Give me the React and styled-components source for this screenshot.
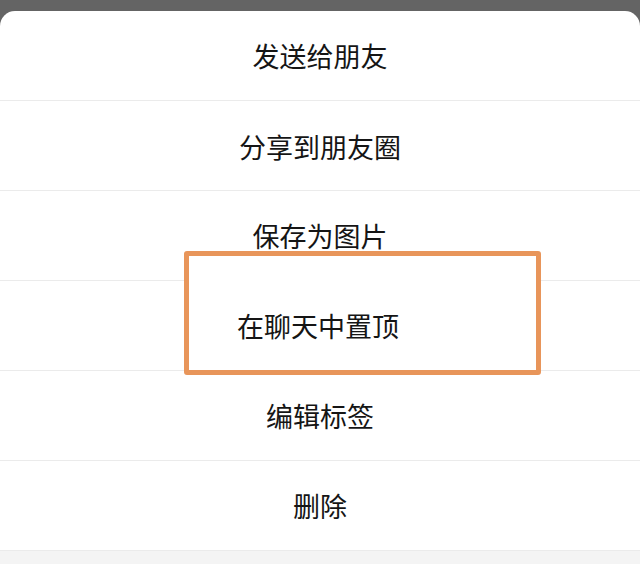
import styled, { createGlobalStyle } from 'styled-components';

const Global = createGlobalStyle`
  html, body {
    margin: 0;
    padding: 0;
    background: #646464;
  }
  body {
    font-family: "Noto Sans CJK SC", "Noto Sans", sans-serif;
  }
`;

const Page = styled.div`
  width: 640px;
  height: 582px;
  overflow: hidden;
  padding-top: 11px;
  box-sizing: border-box;
`;

const Sheet = styled.div`
  position: relative;
  background: #ffffff;
  border-radius: 15px 15px 0 0;
  height: 571px;
`;

const Row = styled.div`
  height: 90px;
  display: flex;
  align-items: center;
  justify-content: center;
  padding-top: ${p => p.$shift || 0}px;
  box-sizing: border-box;
  border-bottom: 1px solid #ebebeb;
  font-size: 27px;
  color: #151515;
`;

const Gap = styled.div`
  height: 13px;
  background: #f4f4f4;
`;

const Highlight = styled.div`
  position: absolute;
  left: 184px;
  top: 240px;
  width: 357px;
  height: 124px;
  box-sizing: border-box;
  border: 5px solid #e8955a;
  border-radius: 3px;
  background: #ffffff;
  display: flex;
  align-items: center;
  padding-left: 48px;
  padding-top: 24px;
  font-size: 27px;
  color: #151515;
`;

const items = [
  { label: '发送给朋友', shift: 0 },
  { label: '分享到朋友圈', shift: 2 },
  { label: '保存为图片', shift: 0 },
  { label: '' },
  { label: '编辑标签', shift: 0 },
  { label: '删除', shift: 0 },
];

const App = () => {
  return (
    <Page>
      <Global />
      <Sheet>
        {items.map((it, i) => (
          <Row key={i} $shift={it.shift}>{it.label}</Row>
        ))}
        <Gap />
        <Highlight>在聊天中置顶</Highlight>
      </Sheet>
    </Page>
  );
};

export default App;
